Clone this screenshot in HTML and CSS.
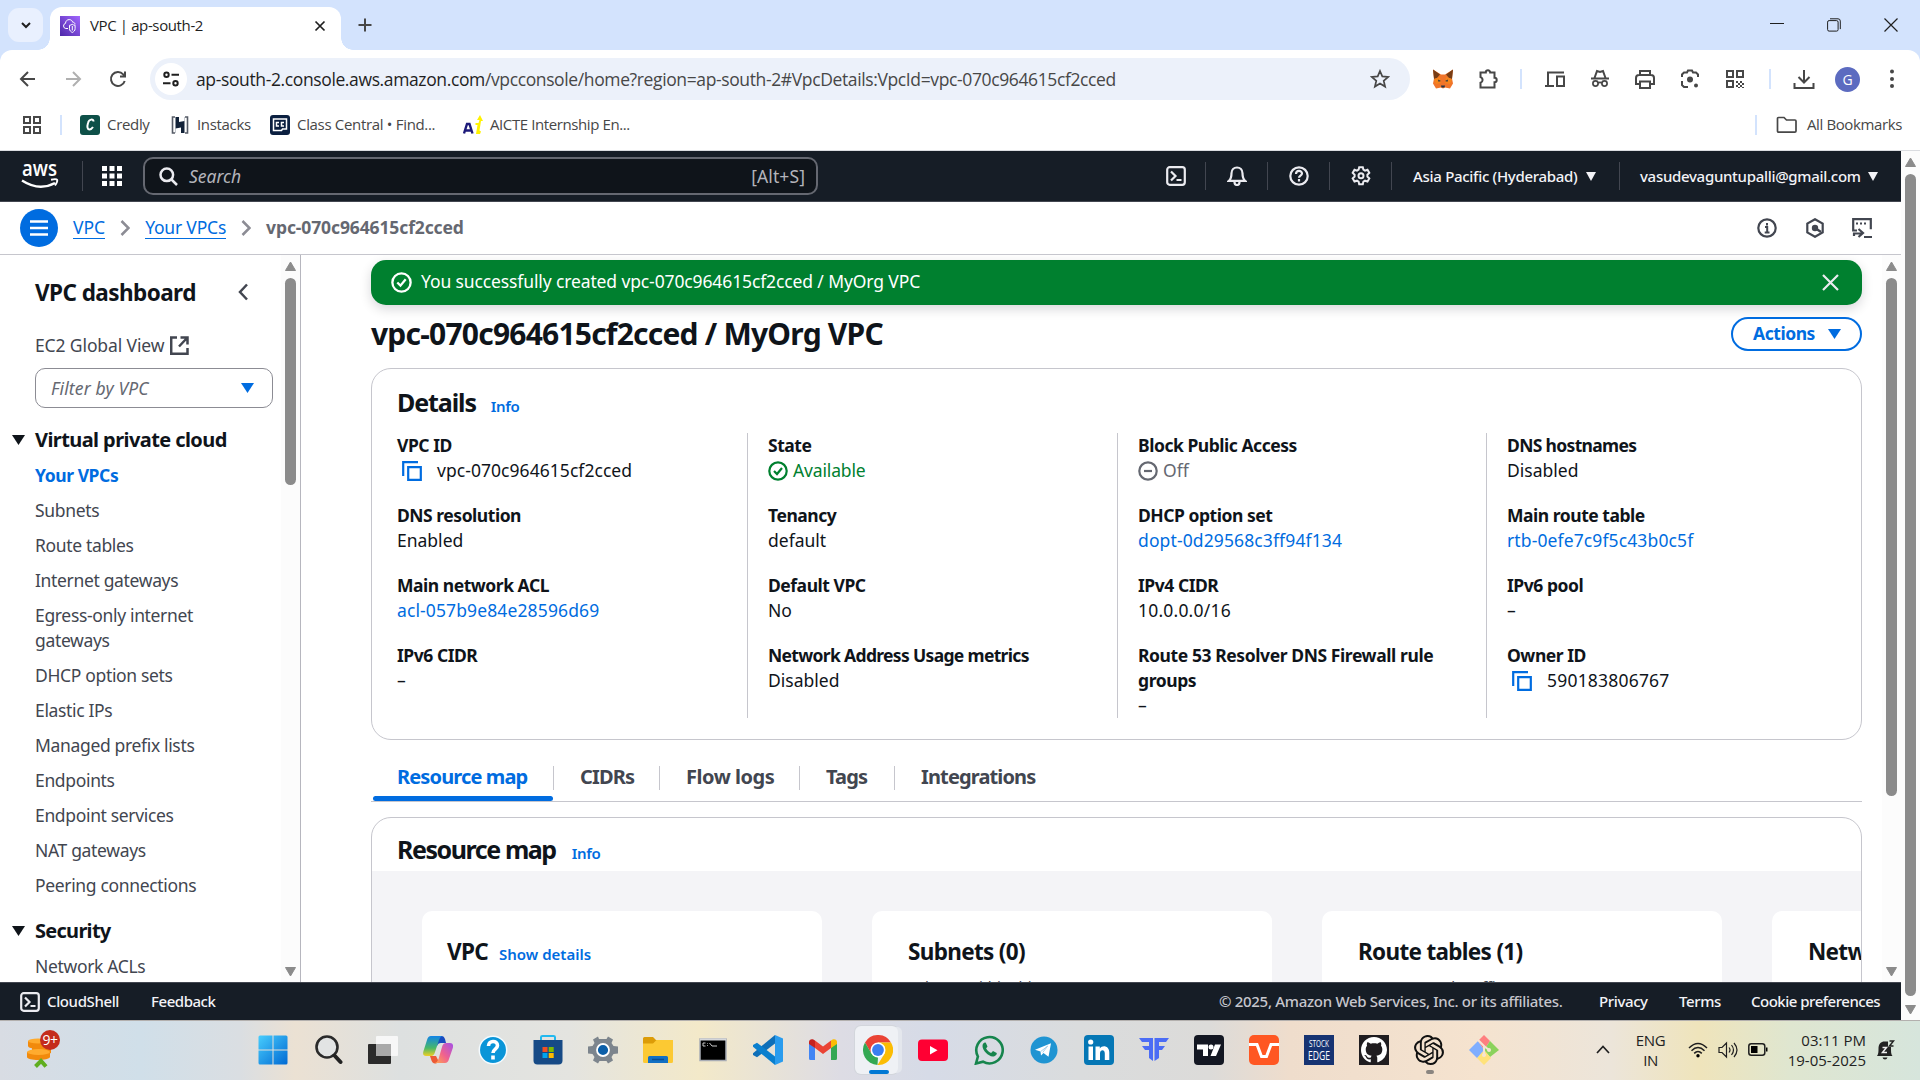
FILE: index.html
```html
<!DOCTYPE html>
<html lang="en">
<head>
<meta charset="utf-8">
<title>VPC | ap-south-2</title>
<link rel="stylesheet" href="styles.css">
</head>
<body>
<div class="tabstrip">
  <button class="tab-search"><svg width="12" height="12" viewBox="0 0 12 12"><path d="M2 4l4 4 4-4" class="s ink w2"/></svg></button>
  <div class="tab">
    <svg class="fav" width="20" height="20" viewBox="0 0 20 20"><defs><linearGradient id="vp" x1="0" y1="1" x2="1" y2="0"><stop offset="0" stop-color="#4d27a8"/><stop offset="1" stop-color="#a166ff"/></linearGradient></defs><path fill="url(#vp)" d="M0 0h20v20H0z"/><path d="M8 12.500H5.800a2.600 2.600 0 0 1-.3-5.100C5.600 5 7.200 3.600 9.200 3.600c1.900 0 3 1 3.500 2.600 1.500 0 2.300.9 2.300 2.200M9.500 9.300c1 0 2-.5 2.800-1 .8.500 1.800 1 2.800 1v3.400c0 2-1.400 3-2.800 3.800-1.400-.8-2.800-1.800-2.800-3.800zM12.300 10v4.500" fill="none" stroke="#fff"/></svg>
    <span class="tab-title">VPC | ap-south-2</span>
    <svg class="tab-x" width="12" height="12" viewBox="0 0 12 12"><path d="M1.500 1.500l9 9M10.500 1.500l-9 9" class="s ink w17"/></svg>
  </div>
  <svg class="plus" width="14" height="14" viewBox="0 0 14 14"><path d="M7 .5v13M.5 7h13" class="s gray w2"/></svg>
  <div class="winbtns">
    <svg width="14" height="14" viewBox="0 0 14 14"><path d="M0 5.500h14" class="s ink"/></svg>
    <svg width="14" height="14" viewBox="0 0 14 14"><rect x=".6" y="2.600" width="10.500" height="10.500" rx="1.500" class="s ink"/><path d="M3 .8h8a2.300 2.300 0 0 1 2.300 2.300v8" class="s ink"/></svg>
    <svg width="14" height="14" viewBox="0 0 14 14"><path d="M.5.5l13 13M13.500.5l-13 13" class="s ink w12"/></svg>
  </div>
</div>

<div class="toolbar">
  <svg class="nav1" width="20" height="20" viewBox="0 0 20 20"><path d="M17 10H3.500M10 3l-7 7 7 7" class="s gray w2"/></svg>
  <svg class="nav2" width="20" height="20" viewBox="0 0 20 20"><path d="M3 10h13.500M10 3l7 7-7 7" class="s dim w2"/></svg>
  <svg class="nav3" width="20" height="20" viewBox="0 0 20 20"><path d="M16.700 12a7 7 0 1 1-1.500-6.700L17 7.300M17 2.500v5h-5" class="s gray w2"/></svg>
  <div class="omnibox">
    <span class="siteinfo"><svg width="18" height="18" viewBox="0 0 18 18"><circle cx="4.500" cy="4.800" r="2.200" class="s ink w2"/><path d="M9.500 4.800H17M1 13.200h7.500" class="s ink w2"/><circle cx="13.500" cy="13.200" r="2.200" class="s ink w2"/></svg></span>
    <span class="url"><b>ap-south-2.console.aws.amazon.com</b>/vpcconsole/home?region=ap-south-2#VpcDetails:VpcId=vpc-070c964615cf2cced</span>
    <svg class="star" width="20" height="20" viewBox="0 0 20 20"><path d="M10 2l2.300 5.400 5.900.5-4.500 3.900 1.400 5.800L10 14.500l-5.100 3.100 1.400-5.800L1.800 7.900l5.900-.5z" class="s gray w17"/></svg>
  </div>
  <div class="exts">
    <svg viewBox="0 0 22 22"><path fill="#f0742a" d="M1 1.500l8 5h4l8-5-1 9 1 5-3 5-5-1-2 1-2-1-5 1-3-5 1-5z"/><path fill="#763d16" d="M1 1.500l7 5-3 3.500-3 1zM21 1.500l-7 5 3 3.500 3 1z"/><path fill="#f6851b" d="M2 11l6-2 1 6-5 1zM20 11l-6-2-1 6 5 1z"/><path fill="#233447" d="M6 11.500l3 1.500-2.500.8zM16 11.500l-3 1.500 2.500.8zM9 17.500h4l-.5 2h-3z"/></svg>
    <svg viewBox="0 0 22 22"><path d="M2.500 4.500h5.300a2.200 2.200 0 1 1 4.400 0h4.300v5.300a2.200 2.200 0 1 1 0 4.400v5.300h-14v-4.700a3 3 0 0 0 0-5.700z" class="s gray w2"/></svg>
    <i class="vsep"></i>
    <svg viewBox="0 0 22 22"><path d="M1 18h9M4 18V4.500h16M13 8.500h7v9.500h-7z" class="s gray w2"/></svg>
    <svg viewBox="0 0 22 22"><path d="M2 10.500h18M5.500 10L8 3l3 1 3-1 2.500 7" class="s gray w2"/><circle cx="6.500" cy="15.500" r="2.600" class="s gray w17"/><circle cx="15.500" cy="15.500" r="2.600" class="s gray w17"/><path d="M9 15q2-1.200 4 0" class="s gray w17"/></svg>
    <svg viewBox="0 0 22 22"><path d="M6 7V3h10v4M6 16H2V10a3 3 0 0 1 3-3h12a3 3 0 0 1 3 3v6h-4M6 13.500h10V20H6z" class="s gray w2"/></svg>
    <svg viewBox="0 0 22 22"><path d="M3 9V6.500L5 4.500h3l1-2h4l1 2h3l2 2V9M3 13v4l2 2h4" class="s gray w2"/><circle cx="11" cy="11.500" r="3" fill="#474747"/><circle cx="17" cy="17.500" r="2" fill="#474747"/></svg>
    <svg viewBox="0 0 22 22"><path d="M3 3h6v6H3zM13 3h6v6h-6zM3 13h6v6H3z" class="s gray w2"/><path d="M12 13h2v2h-2zM16 13h2v2h-2zM14 15h2v2h-2zM18 15h2v2h-2zM12 17h2v2h-2zM16 17h2v2h-2zM18 19h2v1h-2zM14 19h2v1h-2z" fill="#474747"/></svg>
    <i class="vsep"></i>
    <svg viewBox="0 0 22 22"><path d="M11 2v12M5.500 9l5.500 5.500L16.500 9M1.500 15v5h19v-5" class="s gray w2"/></svg>
    <span class="avatar">G</span>
    <svg viewBox="0 0 22 22"><circle cx="11" cy="3.500" r="2" fill="#474747"/><circle cx="11" cy="11" r="2" fill="#474747"/><circle cx="11" cy="18" r="2" fill="#474747"/></svg>
  </div>
</div>

<div class="bookmarks">
  <svg class="bm-grid" width="18" height="18" viewBox="0 0 18 18"><path d="M1 1h6v6H1zM11 1h6v6h-6zM1 11h6v6H1zM11 11h6v6h-6z" class="s gray w2"/></svg>
  <i class="vsep"></i>
  <span class="bm b1"><svg width="20" height="20" viewBox="0 0 20 20"><rect width="20" height="20" rx="3" fill="#0e5048"/><path d="M13.500 6.500c0-3-4.500-2.500-5.500 1.500-1.200 4-.5 6.500 1.500 6.500 1.500 0 2.500-1 3.500-2.500" fill="none" stroke="#fff" stroke-width="2"/></svg>Credly</span>
  <span class="bm b2"><svg width="20" height="20" viewBox="0 0 20 20"><path d="M5 2H2.500v16H5M15 2h2.500v16H15" fill="none" stroke="#555b66" stroke-width="1.600"/><path fill="#122238" d="M5.500 2h9v16h-9z"/><path fill="#fff" d="M9 2h5.500v4L9 7zM5.500 13.500L11 12.500V18H5.500z"/></svg>Instacks</span>
  <span class="bm b3"><svg width="20" height="20" viewBox="0 0 20 20"><rect width="20" height="20" rx="3" fill="#0b1f40"/><path d="M3.500 4h13v10h-4l-1 1.500H3.500z" fill="none" stroke="#fff" stroke-width="1.500"/><path d="M9 7.500H6.500v3.500H9M14 7.500h-2.500v3.500H14" fill="none" stroke="#fff" stroke-width="1.500"/></svg>Class Central • Find...</span>
  <span class="bm b4"><svg width="20" height="20" viewBox="0 0 20 20"><path d="M1 18.500L4 9h2.500l3 9.500M2.500 15.500h5.500" fill="none" stroke="#1d1a7a" stroke-width="2.400"/><path fill="#fff200" d="M17 0l3 6h-2l-1.500 9.500 1.500 1-1 2.500h-4l1.500-9h-2V8h3l1-3h-2.500z"/></svg>AICTE Internship En...</span>
  <span class="allbm"><i class="vsep"></i><svg width="22" height="18" viewBox="0 0 22 18"><path d="M1.500 2.500q0-1 1-1h5.500l2.500 2.500h8.500q1 0 1 1V15q0 1.200-1.200 1.200H2.700q-1.200 0-1.200-1.200z" class="s gray w17"/></svg>All Bookmarks</span>
</div>

<div class="page">
<div class="console">
  <header class="awsbar">
    <svg class="awslogo" width="38" height="27" viewBox="0 0 38 27"><text x="1" y="14" textLength="35" lengthAdjust="spacingAndGlyphs" class="awstext">aws</text><path d="M1 18.500q17 11 33 2.500" fill="none" stroke="#fff" stroke-width="2.400"/><path d="M30 17.800q5.500-1.200 6.200.2.500 1.600-2.200 5.500" fill="none" stroke="#fff" stroke-width="1.900"/></svg>
    <i class="hsep"></i>
    <svg class="apps" width="20" height="20" viewBox="0 0 20 20"><path fill="#fff" d="M0 0h5v5H0zM7.500 0h5v5h-5zM15 0h5v5h-5zM0 7.500h5v5H0zM7.500 7.500h5v5h-5zM15 7.500h5v5h-5zM0 15h5v5H0zM7.500 15h5v5h-5zM15 15h5v5h-5z"/></svg>
    <div class="search"><svg width="19" height="19" viewBox="0 0 19 19"><circle cx="7.800" cy="7.800" r="6.300" class="s lite w25"/><path d="M12.500 12.500l5.500 5.500" class="s lite w25"/></svg><em>Search</em><span>[Alt+S]</span></div>
    <div class="hcells">
      <a><svg width="20" height="20" viewBox="0 0 20 20"><rect x="1.200" y="1.200" width="17.600" height="17.600" rx="2.500" class="s lite w22"/><path d="M5 5.500L9.500 10 5 14.500M10.500 14H15.500" class="s lite w22"/></svg></a>
      <a><svg width="20" height="20" viewBox="0 0 20 20"><path d="M2 14.800h16c-2-1.800-2.500-4-2.500-7.500C15.500 3.500 13 1.500 10 1.500S4.500 3.500 4.500 7.300C4.500 10.800 4 13 2 14.800zM7.500 16c0 4 5 4 5 0" class="s lite w22"/></svg></a>
      <a><svg width="20" height="20" viewBox="0 0 20 20"><circle cx="10" cy="10" r="8.700" class="s lite w22"/><path d="M7 8c0-4 6-4 6-.5 0 2.200-3 2-3 4.300M10 13v2.500" class="s lite w22"/></svg></a>
      <a><svg width="20" height="20" viewBox="0 0 20 20"><path d="M8.200 1.200h3.600l.6 2.500 1.600.9 2.500-.8 1.800 3.100-1.900 1.800v1.900l1.900 1.800-1.800 3.100-2.500-.8-1.600.9-.6 2.700H8.200l-.6-2.700-1.600-.9-2.500.8-1.800-3.100 1.900-1.800V8.700L1.700 6.900l1.800-3.100 2.500.8 1.600-.9z" class="s lite w2"/><circle cx="10" cy="9.800" r="2.500" class="s lite w2"/></svg></a>
      <a class="region"><span>Asia Pacific (Hyderabad)</span><svg class="car" width="10" height="9" viewBox="0 0 10 9"><path d="M0 0h10L5 9z" fill="#f3f3f7"/></svg></a>
      <a class="acct"><span>vasudevaguntupalli@gmail.com</span><svg class="car" width="10" height="9" viewBox="0 0 10 9"><path d="M0 0h10L5 9z" fill="#f3f3f7"/></svg></a>
    </div>
  </header>
  <nav class="crumbs">
    <span class="burger"><svg width="18" height="16" viewBox="0 0 18 16"><path d="M0 1.500h18M0 8h18M0 14.500h18" stroke="#fff" stroke-width="2.500"/></svg></span>
    <a class="c1">VPC</a><svg class="chev" width="10" height="16" viewBox="0 0 10 16"><path d="M1.500 1l7 7-7 7" class="s w25 chv"/></svg>
    <a class="c2">Your VPCs</a><svg class="chev" width="10" height="16" viewBox="0 0 10 16"><path d="M1.500 1l7 7-7 7" class="s w25 chv"/></svg>
    <b class="c3">vpc-070c964615cf2cced</b>
    <div class="cicons">
      <svg width="20" height="20" viewBox="0 0 20 20"><circle cx="10" cy="10" r="8.700" class="s slate w22"/><path d="M10 5v2.500M8 9h2.200v5M7.700 14.500h4.800" class="s slate w2"/></svg>
      <svg width="20" height="20" viewBox="0 0 20 20"><path d="M10 1.200l7.700 4.400v8.800L10 18.800l-7.700-4.400V5.600z" class="s slate w22"/><circle cx="10" cy="10" r="3.200" fill="#424650"/><path d="M10 10l6 4" class="s slate w25"/></svg>
      <svg width="20" height="20" viewBox="0 0 20 20"><path d="M5 12.500H1.200V1.200h17.600v10M12 19h8" class="s slate w22"/><path d="M4 5.500h2M8 5.500h2M12 5.500h2" class="s slate w22"/><path d="M2 18v-2.500h8M6.500 11l4.500 4-4.500 4" class="s slate w22"/></svg>
    </div>
  </nav>
  <div class="body">
    <aside class="side">
      <div class="sidein">
        <div class="shead"><b>VPC dashboard</b><svg width="10" height="18" viewBox="0 0 10 18"><path d="M9 1.500L2 9l7 7.500" class="s slate w25"/></svg></div>
        <div class="ec2">EC2 Global View<svg width="19" height="19" viewBox="0 0 19 19"><path d="M7 1.500H1.200v16.300h16.300V12M10.500 1.500h7v7M17.500 1.500l-8.500 9" class="s slate w25"/></svg></div>
        <div class="filter"><em>Filter by VPC</em><svg width="13" height="10" viewBox="0 0 13 10"><path d="M0 0h13L6.500 10z" fill="#006ce0"/></svg></div>
        <div class="grp"><svg width="13" height="10" viewBox="0 0 13 10"><path d="M0 0h13L6.500 10z" fill="#0f141a"/></svg><b>Virtual private cloud</b></div>
        <ul><li class="on">Your VPCs</li><li>Subnets</li><li>Route tables</li><li>Internet gateways</li><li>Egress-only internet<br>gateways</li><li>DHCP option sets</li><li>Elastic IPs</li><li>Managed prefix lists</li><li>Endpoints</li><li>Endpoint services</li><li>NAT gateways</li><li>Peering connections</li></ul>
        <div class="grp g2"><svg width="13" height="10" viewBox="0 0 13 10"><path d="M0 0h13L6.500 10z" fill="#0f141a"/></svg><b>Security</b></div>
        <ul><li>Network ACLs</li></ul>
      </div>
      <div class="sb"><svg width="13" height="10" viewBox="0 0 13 10"><path d="M1.500 9.500L6.500 1l5 8.500z" class="arr"/></svg><i class="th1"></i><svg class="dn" width="13" height="10" viewBox="0 0 13 10"><path d="M1.500.5L6.500 9l5-8.500z" class="arr"/></svg></div>
    </aside>
    <main>
      <div class="flash"><svg width="21" height="21" viewBox="0 0 20 20"><circle cx="10" cy="10" r="8.700" class="s wht w22"/><path d="M6 10l3 3 5-6" class="s wht w22"/></svg><span>You successfully created vpc-070c964615cf2cced / MyOrg VPC</span><svg class="fx" width="17" height="17" viewBox="0 0 17 17"><path d="M1 1l15 15M16 1L1 16" stroke="#ebebf0" stroke-width="2.200"/></svg></div>
      <div class="title"><h1>vpc-070c964615cf2cced / MyOrg VPC</h1><button class="actions"><span>Actions</span><svg width="13" height="10" viewBox="0 0 13 10"><path d="M0 0h13L6.500 10z" fill="#006ce0"/></svg></button></div>
      <section class="details">
        <h2>Details<a>Info</a></h2>
        <div class="cols">
          <dl><dt>VPC ID</dt><dd class="cp"><svg width="20" height="20" viewBox="0 0 20 20"><path d="M6.200 6.200h12.600v12.600H6.200zM1.200 15V1.200H16" class="s blue w22"/></svg>vpc-070c964615cf2cced</dd><dt>DNS resolution</dt><dd>Enabled</dd><dt>Main network ACL</dt><dd class="lk">acl-057b9e84e28596d69</dd><dt>IPv6 CIDR</dt><dd>–</dd></dl>
          <dl><dt>State</dt><dd class="ok"><svg width="20" height="20" viewBox="0 0 20 20"><circle cx="10" cy="10" r="8.700" class="s grn w22"/><path d="M6 10l3 3 5-6" class="s grn w22"/></svg>Available</dd><dt>Tenancy</dt><dd>default</dd><dt>Default VPC</dt><dd>No</dd><dt class="nau">Network Address Usage metrics</dt><dd>Disabled</dd></dl>
          <dl><dt>Block Public Access</dt><dd class="off"><svg width="20" height="20" viewBox="0 0 20 20"><circle cx="10" cy="10" r="8.700" class="s w22"/><path d="M6 10h8" class="s w22"/></svg>Off</dd><dt>DHCP option set</dt><dd class="lk">dopt-0d29568c3ff94f134</dd><dt>IPv4 CIDR</dt><dd class="wide">10.0.0.0/16</dd><dt class="r53">Route 53 Resolver DNS Firewall rule<br>groups</dt><dd>–</dd></dl>
          <dl><dt class="nau">DNS hostnames</dt><dd>Disabled</dd><dt>Main route table</dt><dd class="lk">rtb-0efe7c9f5c43b0c5f</dd><dt>IPv6 pool</dt><dd>–</dd><dt>Owner ID</dt><dd class="cp wide"><svg width="20" height="20" viewBox="0 0 20 20"><path d="M6.200 6.200h12.600v12.600H6.200zM1.200 15V1.200H16" class="s blue w22"/></svg>590183806767</dd></dl>
        </div>
      </section>
      <div class="tabs"><a class="t1">Resource map</a><a class="t2">CIDRs</a><a class="t3">Flow logs</a><a class="t4">Tags</a><a class="t5">Integrations</a></div>
      <section class="rmap">
        <h2>Resource map<a>Info</a></h2>
        <div class="cards">
          <div class="card first"><h3>VPC<a>Show details</a></h3><p>Your AWS virtual network</p></div>
          <div class="card"><h3>Subnets (0)</h3><p>Subnets within this VPC</p></div>
          <div class="card"><h3>Route tables (1)</h3><p>Route network traffic to resources</p></div>
          <div class="card"><h3>Network connections (0)</h3><p>Connections to other networks</p></div>
        </div>
      </section>
    </main>
    <div class="sb main-sb"><svg width="13" height="10" viewBox="0 0 13 10"><path d="M1.500 9.500L6.500 1l5 8.500z" class="arr"/></svg><i class="th2"></i><svg class="dn" width="13" height="10" viewBox="0 0 13 10"><path d="M1.500.5L6.500 9l5-8.500z" class="arr"/></svg></div>
  </div>
  <footer>
    <svg width="20" height="20" viewBox="0 0 20 20"><rect x="1.200" y="1.200" width="17.600" height="17.600" rx="2.500" class="s lite w22"/><path d="M5 5.500L9.500 10 5 14.500M10.500 14H15.500" class="s lite w22"/></svg>
    <span class="f1">CloudShell</span><span class="f2">Feedback</span><span class="f3">© 2025, Amazon Web Services, Inc. or its affiliates.</span><span class="f4">Privacy</span><span class="f5">Terms</span><span class="f6">Cookie preferences</span>
  </footer>
</div>
<div class="sb page-sb"><svg width="13" height="10" viewBox="0 0 13 10"><path d="M1.500 9.500L6.500 1l5 8.500z" class="arr"/></svg><i class="th3"></i><svg class="dn" width="13" height="10" viewBox="0 0 13 10"><path d="M1.500.5L6.500 9l5-8.500z" class="arr"/></svg></div>
</div>

<div class="taskbar">
  <div class="widget"><svg width="36" height="40" viewBox="0 0 36 40"><g fill="#f28a0c"><path d="M2 10v5c0 3 14 4 20 1v-6z"/><path d="M6 16v5c0 3 14 4 19 1v-6z"/><path d="M1 21v5c0 4 22 4 23 0v-5z"/></g><g fill="#ffab2e"><ellipse cx="12" cy="10" rx="10" ry="2.500"/><ellipse cx="12.500" cy="21" rx="11.500" ry="3"/></g><path d="M9.500 35.500l5.500-5.500 5 5.500" fill="none" stroke="#5fae1f" stroke-width="4"/></svg><span class="badge">9+</span></div>
  <div class="apps-row">
    <i><svg viewBox="0 0 30 30"><defs><linearGradient id="wn" x1="0" y1="0" x2="1" y2="1"><stop offset="0" stop-color="#48cdfd"/><stop offset="1" stop-color="#0069d3"/></linearGradient></defs><path fill="url(#wn)" d="M.5 2a1.500 1.500 0 0 1 1.500-1.500h12.500v14H.5zM15.500.5H28A1.500 1.500 0 0 1 29.500 2v12.500h-14zM.5 15.500h14v14H2A1.500 1.500 0 0 1 .5 28zM15.500 15.500h14V28a1.500 1.500 0 0 1-1.500 1.500H15.500z"/></svg></i>
    <i><svg viewBox="0 0 30 30"><circle cx="14" cy="12" r="10.500" fill="#e2e4e4" stroke="#2a2a2a" stroke-width="2.600"/><path d="M21.500 20.500l6 6.500" stroke="#222" stroke-width="4" stroke-linecap="round"/></svg></i>
    <i><svg viewBox="0 0 30 30"><rect x="0" y="9" width="23" height="20" rx="1" fill="#2b2b2b"/><rect x="8" y="1" width="22" height="20" rx="1" fill="#f7f7f7"/><path d="M8 9h15v12H8z" fill="#a9a9a9"/></svg></i>
    <i><svg viewBox="0 0 30 30"><defs><linearGradient id="cpa" x1="0" y1="0" x2="0" y2="1"><stop offset="0" stop-color="#1184e8"/><stop offset=".6" stop-color="#48b868"/><stop offset="1" stop-color="#f0cf24"/></linearGradient><linearGradient id="cpb" x1="1" y1="0" x2="0" y2="1"><stop offset="0" stop-color="#a450e8"/><stop offset=".55" stop-color="#f0628e"/><stop offset="1" stop-color="#ffa74e"/></linearGradient></defs><path fill="#174bc0" d="M14 1h5q2 0 3 3l1 4h-5q-3 0-4 3z"/><path fill="url(#cpa)" d="M8 1h11q-2 1-3 4l-4 12q-1 4-4 4H3q-4 0-2.500-5L4 5q1-4 4-4z"/><path fill="#ec5a35" d="M7 21h6l3 6-3 1.500h-1q-2.500 0-3.500-3z"/><path fill="url(#cpb)" d="M22 28H12q2.500-1 3.500-4L19 12q1-4 4-4h4q4 0 2.800 5L26 24q-1 4-4 4z"/></svg></i>
    <i><svg viewBox="0 0 30 30"><circle cx="15" cy="15" r="13.700" fill="#0a95d8" stroke="#f4fbff" stroke-width="1.500"/><path d="M10.500 11c0-6 9-6 9-.5 0 3.800-4.500 3.500-4.500 7.500M15 20.500v4" fill="none" stroke="#fff" stroke-width="3.600"/></svg></i>
    <i><svg viewBox="0 0 30 30"><path d="M8 6V2.200Q8 1 9.500 1h11Q22 1 22 2.200V6" fill="none" stroke="#22b9ef" stroke-width="2"/><path fill="#164a86" d="M.5 5h29v20.500a4 4 0 0 1-4 4h-21a4 4 0 0 1-4-4z"/><path fill="#f25022" d="M9.500 12h5v5h-5z"/><path fill="#7fba00" d="M15.700 12h5v5h-5z"/><path fill="#00a4ef" d="M9.500 18h5v5h-5z"/><path fill="#ffb900" d="M15.700 18h5v5h-5z"/></svg></i>
    <i><svg viewBox="0 0 30 30"><path fill="#7d858d" d="M11 4L10 1.500 5 4.500 6.500 8 4.500 11 0 11.500v7l4.500.5 2 3-1.500 3.500 5 3 1.500-2.500h7l1.500 2.500 5-3-1.500-3.500 2-3 4.500-.5v-7l-4.500-.5-2-3L25 4.500l-5-3L18.500 4z"/><circle cx="15" cy="15" r="6" fill="#0b5ea8" stroke="#fff" stroke-width="1.800"/></svg></i>
    <i><svg viewBox="0 0 30 30"><path fill="#dc9c08" d="M0 3.500Q0 2 1.500 2H10l3 3h17v8H0z"/><path fill="#fcc933" d="M0 8.500h10L13.500 5H30v21.500a1.500 1.500 0 0 1-1.500 1.500h-27A1.500 1.500 0 0 1 0 26.500z"/><path fill="#1270c4" d="M5 28v-5.500A1.500 1.500 0 0 1 6.500 21h17a1.500 1.500 0 0 1 1.500 1.500V28z"/><path d="M9 24.500h12" stroke="#0a4c92" stroke-width="1.500"/></svg></i>
    <i><svg viewBox="0 0 30 30"><rect x="2" y="4" width="26" height="21.500" fill="#000" stroke="#a9adb5" stroke-width="1.500"/><path d="M2 4.500h26" stroke="#d4d6da" stroke-width="2"/><path d="M7.500 8H5v3h2.500M9.500 8v.6M9.500 10v.8M11.500 8l2.500 3M14 11h5" stroke="#c8c8c8" fill="none"/></svg></i>
    <i><svg viewBox="0 0 30 30"><path fill="#0f6fb8" d="M22 0v8.500L4 22.300 0 20v-1.800z"/><path fill="#0a7fce" d="M22 30v-8.500L4 7.700 0 10v1.800z"/><path fill="#2a9cee" d="M22 0l8 3.500v23L22 30z"/></svg></i>
    <i><svg viewBox="0 0 30 30"><path fill="#4285f4" d="M1 8l6 4.500V25H2.500A1.500 1.500 0 0 1 1 23.500z"/><path fill="#34a853" d="M29 8l-6 4.500V25h4.500a1.500 1.500 0 0 0 1.500-1.500z"/><path fill="#ea4335" d="M7 5.500l8 6 8-6V13l-8 6-8-6z"/><path fill="#c5221f" d="M1 7c0-2.500 3-4 6-1.500V13L1 9z"/><path fill="#fbbc04" d="M29 7c0-2.500-3-4-6-1.500V13l6-4z"/></svg></i>
    <i class="act"><svg viewBox="0 0 30 30"><path fill="#ea4335" d="M2 7.500A15 15 0 0 1 28 7.500H15L8.500 19z"/><path fill="#34a853" d="M2 7.500l6.500 11.300L15 22.500 14.500 30A15 15 0 0 1 2 7.500z"/><path fill="#fbbc04" d="M28 7.500A15 15 0 0 1 14.500 30l7-11.200V11L15 7.500z"/><circle cx="15" cy="15" r="7.500" fill="#fff"/><circle cx="15" cy="15" r="5.900" fill="#3b7ef0"/></svg></i>
    <i><svg viewBox="0 0 30 30"><rect y="4.500" width="30" height="21.500" rx="4" fill="#f03"/><path fill="#fff" d="M12 11l7.500 4.300L12 19.500z"/></svg></i>
    <i><svg viewBox="0 0 30 30"><path d="M2 28.500l1.900-7A13.200 13.200 0 1 1 9 26.700z" fill="none" stroke="#16854d" stroke-width="2.600"/><path fill="#16854d" d="M8.500 11c0-2.500 2-4 3.300-3.200l1.700 3.700-1.400 2c1.300 2.300 3 3.700 5 4.500l1.900-2 3.700 1.900c.5 1.500-1.500 3.600-4 3.600-4.500-.3-10.200-6-10.200-10.500z"/></svg></i>
    <i><svg viewBox="0 0 30 30"><circle cx="15" cy="15" r="13.500" fill="#1f94d2"/><path fill="#fff" d="M6 14.700l16-6.500-2.500 13.500-5-3.600-2.500 2.400-.5-4z"/><path d="M11.700 16.500l7-5.500-5 6.500" stroke="#a9d2ea" fill="none"/></svg></i>
    <i><svg viewBox="0 0 30 30"><rect width="30" height="30" rx="4" fill="#0577b5"/><path fill="#fff" d="M4.500 11.500H9V25H4.500zM11.500 11.500h4.300v2c2.500-4 9.500-3 9.500 4V25h-4.500v-6.500c0-4.500-4.800-4-4.800 0V25h-4.500z"/><circle cx="6.700" cy="7" r="2.600" fill="#fff"/></svg></i>
    <i><svg viewBox="0 0 30 30"><path fill="#4b6cf5" d="M0 3h14v23l-4-3v-8H6l-3-4h7V7H3zM15.500 3H30l-3 4h-7v4h6l-3 4h-3v8l-4.500 3z"/></svg></i>
    <i><svg viewBox="0 0 30 30"><rect width="30" height="30" rx="4" fill="#131722"/><path fill="#fff" d="M3 9.500h11V21H9v-6.500H3zM21 9.500h6L22 21h-5.500z"/><circle cx="17" cy="12" r="2.500" fill="#fff"/></svg></i>
    <i><svg viewBox="0 0 30 30"><rect width="30" height="30" rx="5" fill="#ff5722"/><path d="M0 9.500h8l4.500 12h5l4.500-12h8" fill="none" stroke="#fff" stroke-width="3"/></svg></i>
    <i><svg viewBox="0 0 30 30"><path fill="#163372" d="M0 0h30v30H0z"/><text x="5" y="11.500" textLength="20" lengthAdjust="spacingAndGlyphs" class="stk">STOCK</text><text x="4" y="25" textLength="22" lengthAdjust="spacingAndGlyphs" class="edg">EDGE</text></svg></i>
    <i><svg viewBox="0 0 30 30"><path fill="#201d20" d="M0 0h30v30H0z"/><path transform="translate(2 2) scale(1.625)" fill="#fff" d="M8 0C3.580 0 0 3.580 0 8c0 3.540 2.290 6.530 5.470 7.590.4.070.55-.170.550-.380 0-.190-.010-.820-.010-1.490-2.010.370-2.530-.490-2.690-.940-.090-.230-.480-.940-.820-1.130-.280-.150-.680-.520-.010-.530.630-.010 1.080.580 1.230.820.720 1.210 1.870.870 2.330.660.070-.520.280-.870.510-1.070-1.780-.200-3.640-.890-3.640-3.950 0-.870.310-1.590.820-2.150-.080-.200-.360-1.020.080-2.120 0 0 .670-.210 2.200.820.640-.180 1.320-.270 2-.270s1.360.090 2 .270c1.530-1.040 2.200-.820 2.200-.820.440 1.100.160 1.920.080 2.120.510.560.820 1.270.820 2.150 0 3.070-1.870 3.750-3.650 3.950.290.250.540.730.540 1.480 0 1.070-.010 1.930-.010 2.200 0 .210.150.460.550.380A8.010 8.010 0 0 0 16 8c0-4.420-3.580-8-8-8z"/></svg></i>
    <i class="run"><svg viewBox="0 0 24 24"><path fill="#111" d="M22.2819 9.8211a5.9847 5.9847 0 0 0-.5157-4.9108 6.0462 6.0462 0 0 0-6.5098-2.9A6.0651 6.0651 0 0 0 4.9807 4.1818a5.9847 5.9847 0 0 0-3.9977 2.9 6.0462 6.0462 0 0 0 .7427 7.0966 5.98 5.98 0 0 0 .511 4.9107 6.051 6.051 0 0 0 6.5146 2.9001A5.9847 5.9847 0 0 0 13.2599 24a6.0557 6.0557 0 0 0 5.7718-4.2058 5.9894 5.9894 0 0 0 3.9977-2.9001 6.0557 6.0557 0 0 0-.7475-7.0729zm-9.022 12.6081a4.4755 4.4755 0 0 1-2.8764-1.0408l.1419-.0804 4.7783-2.7582a.7948.7948 0 0 0 .3927-.6813v-6.7369l2.02 1.1686a.071.071 0 0 1 .038.052v5.5826a4.504 4.504 0 0 1-4.4945 4.4944zm-9.6607-4.1254a4.4708 4.4708 0 0 1-.5346-3.0137l.142.0852 4.783 2.7582a.7712.7712 0 0 0 .7806 0l5.8428-3.3685v2.3324a.0804.0804 0 0 1-.0332.0615L9.74 19.9502a4.4992 4.4992 0 0 1-6.1408-1.6464zM2.3408 7.8956a4.485 4.485 0 0 1 2.3655-1.9728V11.6a.7664.7664 0 0 0 .3879.6765l5.8144 3.3543-2.0201 1.1685a.0757.0757 0 0 1-.071 0l-4.8303-2.7865A4.504 4.504 0 0 1 2.3408 7.872zm16.5963 3.8558L13.1038 8.364 15.1192 7.2a.0757.0757 0 0 1 .071 0l4.8303 2.7913a4.4944 4.4944 0 0 1-.6765 8.1042v-5.6772a.79.79 0 0 0-.407-.667zm2.0107-3.0231l-.142-.0852-4.7735-2.7818a.7759.7759 0 0 0-.7854 0L9.409 9.2297V6.8974a.0662.0662 0 0 1 .0284-.0615l4.8303-2.7866a4.4992 4.4992 0 0 1 6.6802 4.66zM8.3065 12.863l-2.02-1.1638a.0804.0804 0 0 1-.038-.0567V6.0742a4.4992 4.4992 0 0 1 7.3757-3.4537l-.142.0805L8.704 5.459a.7948.7948 0 0 0-.3927.6813zm1.0976-2.3654l2.602-1.4998 2.6069 1.4998v2.9994l-2.5974 1.4997-2.6067-1.4997Z"/></svg></i>
    <i><svg viewBox="0 0 30 30"><path fill="#ff7f7f" d="M15 0l6 6-6 9-6-9z"/><path fill="#8bd25c" d="M30 15l-9-9-6 9 6 7z"/><path fill="#ffe27a" d="M15 30l7-7-7-8-7 8z"/><path fill="#7faeff" d="M0 15l9-9 6 9-7 8z"/><path d="M9 5l6 6v9M15 11l5 4" stroke="#f6e4d2" stroke-width="2" fill="none"/><circle cx="15" cy="20" r="2" fill="#f6e4d2"/><circle cx="20" cy="15" r="2" fill="#f6e4d2"/></svg></i>
  </div>
  <div class="tray">
    <svg class="up" width="14" height="9" viewBox="0 0 14 9"><path d="M1 8l6-6.500L13 8" class="s ink w17"/></svg>
    <div class="lang">ENG<br>IN</div>
    <svg class="wifi" width="20" height="16" viewBox="0 0 20 16"><path d="M1 6q9-9 18 0M3.500 8.700q6.500-6.500 13 0M6.200 11.400q3.800-3.800 7.600 0" class="s ink w15"/><circle cx="10" cy="13.800" r="1.700"/></svg>
    <svg class="vol" width="20" height="18" viewBox="0 0 20 18"><path d="M1 6.500h3L8.500 2v14L4 11.500H1zM11 6.500q2 2.500 0 5M13.500 4q4 5 0 10M16 2q6 7 0 14" class="s ink w12"/></svg>
    <svg class="bat" width="20" height="13" viewBox="0 0 20 13"><rect x=".8" y=".8" width="16" height="11.400" rx="2.500" class="s ink w15"/><path d="M3 3h6.500v7H3zM18 4.500h1.500v4H18z"/></svg>
    <div class="clock">03:11 PM<br>19-05-2025</div>
    <svg class="bell" width="18" height="20" viewBox="0 0 18 20"><path fill="#222" d="M0 16c1.500-2 1.500-4 1.500-7.500C1.500 4 4 1.500 7.500 1.500h3.500v5.500h3c0 5 0 7 1.500 9zM5.500 17.500h5q-.5 2-2.500 2t-2.500-2z"/><path d="M5.500 7.500h4l-4 5H10" stroke="#eee" stroke-width="1.500" fill="none"/><path d="M12.500 1h4l-4 5h4" stroke="#222" stroke-width="1.500" fill="none"/></svg>
  </div>
</div>
</body>
</html>
```
FILE: styles.css
```css
*{box-sizing:border-box}
html,body{margin:0;width:1920px;height:1080px;overflow:hidden}
body{font-family:"Open Sans","Noto Sans",sans-serif;background:#fff;color:#0f141a;display:flex;flex-direction:column}
svg{display:block;flex:none}
i,em,b{flex:none}
button{padding:0;border:0;font:inherit}
ul,dl,dd,h1,h2,h3,p{margin:0;padding:0;list-style:none}
.s{fill:none;stroke-width:1}
.ink{stroke:#1f1f1f}.gray{stroke:#474747}.dim{stroke:#b0b0b0}.lite{stroke:#ebebf0}.slate{stroke:#424650}.wht{stroke:#fff}.blue{stroke:#006ce0}.grn{stroke:#00802f}.chv{stroke:#8c8c94}.off .s{stroke:#656871}
.w12{stroke-width:1.2}.w15{stroke-width:1.5}.w17{stroke-width:1.7}.w2{stroke-width:2}.w22{stroke-width:2.2}.w25{stroke-width:2.5}
.arr{fill:#8b8b8b;stroke:#8b8b8b;stroke-linejoin:round}

.tabstrip{height:50px;background:#d3e3fd;display:flex;align-items:flex-start;position:relative}
.tab-search{margin:8px 0 0 8px;width:35px;height:34px;border-radius:11px;background:#e9f0fe;display:flex;align-items:center;justify-content:center}
.tab{margin:7px 0 0 7px;width:291px;height:43px;background:#fff;border-radius:12px 12px 0 0;display:flex;align-items:center;padding:0 15px 6px 10px;position:relative}
.tab::before,.tab::after{content:"";position:absolute;bottom:0;width:12px;height:12px}
.tab::before{left:-12px;background:radial-gradient(circle at 0 0,transparent 11.500px,#fff 12px)}
.tab::after{right:-12px;background:radial-gradient(circle at 12px 0,transparent 11.500px,#fff 12px)}
.tab-title{margin-left:10px;font-size:15px;letter-spacing:-.38px;flex:1;color:#1f1f1f;white-space:nowrap;padding-bottom:2px}
.plus{margin:18px 0 0 17px}
.winbtns{margin:18px 22px 0 auto;display:flex;gap:43px}

.toolbar{height:58px;background:#fff;display:flex;align-items:center;padding-left:18px;border-radius:12px 12px 0 0;box-shadow:0 -12px 0 #d3e3fd;clip-path:inset(0)}
.nav1{margin-right:25px}.nav2{margin-right:25px}.nav3{margin-right:22px}
.omnibox{width:1260px;height:42px;border-radius:21px;background:#ecf1fa;display:flex;align-items:center;padding:0 20px 0 5px}
.siteinfo{width:32px;height:32px;border-radius:50%;background:#fff;display:flex;align-items:center;justify-content:center}
.url{margin-left:9px;font-size:17.500px;letter-spacing:-.375px;color:#474747;white-space:nowrap;flex:1}
.url b{font-weight:400;color:#1f1f1f}
.exts{flex:1;display:flex;align-items:center;height:42px;padding-left:22px}
.exts svg{width:22px;height:22px;margin-right:23px}
.exts svg:nth-child(1){margin-right:24px}
.exts svg:nth-child(2){margin-right:20px}
.vsep{width:2px;height:20px;background:#d3e3fd;flex:none}
.exts .vsep{margin-right:22px}
.exts svg:nth-child(8){margin-right:23px}
.exts .avatar{width:25px;height:25px;border-radius:50%;background:#5c6bc0;color:#fff;font-size:14px;display:flex;align-items:center;justify-content:center;margin:0 21px 0 -3px}
.exts svg:last-child{margin-right:0}

.bookmarks{height:43px;border-bottom:1px solid #dadce0;display:flex;align-items:flex-start;padding:7px 18px 0 23px;font-size:15px;letter-spacing:-.32px;color:#474747;white-space:nowrap}
.bm-grid{margin:1px 19px 0 0}
.bm,.allbm{display:flex;align-items:center;height:18px;line-height:18px}
.bm svg{margin:2px 7px 0 0}
.b1{margin-left:18px;width:90px}.b2{width:100px}.b3{width:193px}.b4{letter-spacing:-.4px}
.allbm{margin-left:auto;letter-spacing:-.38px}.allbm i{margin-top:2px}.allbm svg{margin:2px 9px 0 19px}

.page{display:flex;height:869px}
.console{width:1901px;display:flex;flex-direction:column;font-family:"Noto Sans","Open Sans",sans-serif;font-size:17.500px;line-height:25px}
.awsbar{height:51px;background:#161d26;border-bottom:1px solid #424650;display:flex;align-items:center;white-space:nowrap}
.awslogo{margin:-2px 0 0 21px;overflow:visible}
.awstext{font:600 22px "Open Sans",sans-serif;fill:#fff}
.hsep{width:1px;height:30px;background:#424650;margin-left:23px}
.apps{margin:0 21px 0 19px}
.search{width:675px;height:38px;border:2px solid #656871;border-radius:10px;background:#0f141a;display:flex;align-items:center;padding:0 11px 0 14px;color:#b4b4bb;font-size:17.500px}
.search em{margin-left:11px;flex:1;letter-spacing:0}
.search span{font-size:17.500px;letter-spacing:.1px}
.hcells{margin-left:auto;display:flex;align-items:center;height:30px;color:#f3f3f7;font-size:15px;font-weight:500;letter-spacing:-.3px}
.hcells a{width:62px;height:28px;display:flex;align-items:center;justify-content:center;border-left:1px solid #424650}
.hcells a:first-child{border:0;width:60px;padding-left:2px}
.hcells .region{width:228px;justify-content:flex-start;padding-left:21px}
.hcells .acct{width:282px;justify-content:flex-start;padding-left:20px}
.region span{width:173px}.acct span{width:228px}

.crumbs{height:53px;border-bottom:1px solid #c6c6cd;display:flex;align-items:center;padding-left:20px;white-space:nowrap}
.burger{width:38px;height:38px;border-radius:50%;background:#006ce0;display:flex;align-items:center;justify-content:center;margin-right:15px}
.crumbs a{color:#006ce0;border-bottom:1px solid #006ce0;line-height:22px;margin-top:-1px}
.c1{margin-right:15px}.chev{margin-right:15px}.c2{margin-right:15px;letter-spacing:-.2px}
.c3{color:#656871;letter-spacing:-.12px;margin-top:-1px}
.cicons{margin:0 29px 0 auto;display:flex;gap:27.500px}

.body{flex:1;display:flex;min-height:0;height:727px}
.side{width:301px;border-right:1px solid #b6b6be;display:flex;overflow:hidden}
.sidein{width:281px;padding:0 9px 0 35px;color:#424650;white-space:nowrap;overflow:hidden}
.shead{display:flex;justify-content:space-between;align-items:center;margin-top:22px;height:30px;padding-right:24px;font-size:22.500px;letter-spacing:-.56px;color:#0f141a}
.ec2{display:flex;align-items:center;gap:6px;margin-top:26px;height:25px;letter-spacing:-.12px}
.filter{margin-top:10px;width:238px;height:40px;border:1px solid #8c8c94;border-radius:10px;display:flex;align-items:center;justify-content:space-between;padding:0 18px 0 15px;color:#656871;letter-spacing:.15px}
.grp{display:flex;align-items:center;height:25px;margin:19px 0 6px -23px;gap:10px;font-size:20px;letter-spacing:-.58px;color:#0f141a}
.g2{margin-top:15px;letter-spacing:-.72px}
.sidein ul{letter-spacing:-.34px}
.sidein li{padding:5px 0}
.sidein .on{color:#006ce0;font-weight:700;letter-spacing:-.42px}
.sb{width:19px;background:#fcfcfc;display:flex;flex-direction:column;align-items:center;padding-top:6px;flex:none}
.sb i{width:11px;border-radius:6px;background:#8b8b8b;margin-top:7px}
.sb .dn{margin:auto 0 5px}
.th1{height:207px}.th2{height:518px}.th3{height:822px}
main{flex:1;min-width:0;padding:5px 20px 0 70px;overflow:hidden;white-space:nowrap}
.flash{height:45px;border-radius:15px;background:#00802f;color:#fff;display:flex;align-items:center;padding:0 23px 0 20px;box-shadow:0 4px 12px rgba(0,7,22,.16)}
.flash span{margin:-2px 0 0 9px;flex:1;letter-spacing:-.12px}
.fx{margin-top:-1px}
.title{display:flex;justify-content:space-between;align-items:center;margin-top:10px;height:38px}
h1{font-size:30px;line-height:38px;letter-spacing:-.78px;margin-top:-1px}
.actions{width:131px;height:34px;border:2.500px solid #006ce0;border-radius:17px;background:#fff;color:#006ce0;font-weight:700;font-size:17.500px;letter-spacing:-.45px;display:flex;align-items:center;gap:13px;padding-left:20px}
.actions span{line-height:24px;margin-top:-2px}
.details{margin-top:15px;height:372px;border:1px solid #c6c6cd;border-radius:20px;padding:18px 25px 0}
h2{font-size:25px;line-height:31px;letter-spacing:-1.100px}
.details h2{height:31px}
h2 a,h3 a{font-size:15px;font-weight:600;color:#006ce0;letter-spacing:-.3px;margin-left:15px}
.cols{margin-top:15px;display:grid;grid-template-columns:350px 370px 369px 1fr;height:285px}
.cols dl{height:285px}
.cols dl+dl{border-left:1px solid #c6c6cd;padding-left:20px}
dt{font-weight:700;letter-spacing:-.47px}
.nau{letter-spacing:-.67px}.r53{letter-spacing:-.41px}
dd{margin-bottom:20px}
.cp,.ok,.off{display:flex;align-items:center}
.cp{letter-spacing:.05px}
.cp svg{margin:0 15px 0 5px}
.ok svg,.off svg{margin-right:5px}
.lk{color:#006ce0;letter-spacing:.12px}.ok{color:#00802f;letter-spacing:-.15px}.off{color:#656871}
.wide{letter-spacing:.2px}
.tabs{margin-top:14px;height:48px;border-bottom:1px solid #c6c6cd;display:flex;font-size:20px;font-weight:700;letter-spacing:-.86px;color:#424650;position:relative}
.tabs a{height:24px;margin-top:12px;line-height:22px;padding-left:26px;border-right:1px solid #c6c6cd}
.t1{width:183px;color:#006ce0}.t2{width:106px}.tabs .t3{width:140px;letter-spacing:-.46px}.t4{width:95px}.tabs .t5{border:0}
.t1::after{content:"";position:absolute;left:2px;bottom:0;width:180px;height:5px;border-radius:3px;background:#006ce0}
.rmap{margin-top:15px;height:400px;border:1px solid #c6c6cd;border-radius:20px;overflow:hidden}
.rmap h2{height:53px;padding:16px 25px 0;letter-spacing:-1.430px}
.rmap h2 a{margin-left:16px}
.cards{background:#f4f4f7;height:346px;padding:40px 50px;display:flex;gap:50px}
.card{width:400px;flex:none;background:#fff;border-radius:10px;padding:27px 36px}
.first{padding-left:25px}
h3{font-size:22.500px;line-height:28px;letter-spacing:-.68px}
h3 a{margin-left:11px;letter-spacing:0}
.card p{font-size:15px;line-height:20px;margin-top:9.500px;color:#424650;letter-spacing:-.2px}
.first p{padding-left:10px}

footer{height:38px;flex:none;position:relative;background:#161d26;border-top:1px solid #424650;display:flex;align-items:center;padding-left:20px;color:#f3f3f7;font-size:15px;font-weight:500;letter-spacing:-.38px;white-space:nowrap}
.f1{width:104px;margin-left:7px}.f2{flex:1;letter-spacing:-.45px}.f3{width:380px;color:#c6c6cd;letter-spacing:-.3px}.f4{width:80px}.f5{width:72px}.f6{width:150px;letter-spacing:-.5px}

.taskbar{height:60px;border-top:1px solid #b3b0ae;display:flex;align-items:center;position:relative;background:linear-gradient(90deg,#d8dce3 0,#d0dfe9 140px,#dadee2 240px,#ebe1d3 295px,#dde0e0 400px,#e4e4e0 570px,#f3e9c9 700px,#dddce4 840px,#d6dbe7 930px,#dadcdd 1080px,#dcdbd9 1210px,#efddcc 1290px,#f5e3cf 1480px,#ece5da 1610px,#efe4bb 1700px,#dfe6d0 1790px,#d6e5dc 1920px)}
.widget{width:245px;padding-left:26px;position:relative}
.badge{position:absolute;left:40px;top:-1px;width:20px;height:20px;border-radius:50%;background:#c42b1c;color:#fff;font-size:14px;line-height:19px;text-align:center;letter-spacing:-.5px}
.apps-row{display:grid;grid-template-columns:repeat(23,55.080px);padding-bottom:1px}
.apps-row i{height:48px;display:flex;align-items:center;justify-content:center;position:relative}
.apps-row svg{width:30px;height:30px;position:relative}
.act::before{content:"";position:absolute;left:4px;top:0;width:43px;height:48px;border-radius:6px;background:#eff1f5;box-shadow:5px 0 0 -1px #e4e7ed,0 0 0 1px #d3d6dc}
.act::after{content:"";position:absolute;left:18px;bottom:0;width:20px;height:4px;border-radius:2px;background:#0078d4}
.run::after{content:"";position:absolute;left:24px;bottom:0;width:8px;height:4px;border-radius:2px;background:#8a8580}
.stk{font:9.500px "Open Sans",sans-serif;fill:#fff}
.edg{font:13px "Open Sans",sans-serif;fill:#fff}
.tray{margin-left:auto;display:flex;align-items:center;font-size:15px;line-height:20px;color:#222;letter-spacing:-.4px;padding:0 25px 2px 0}
.up{margin-right:24px}.lang{width:33px;text-align:center;margin-right:21px}
.wifi{margin-right:10px}.vol{margin-right:10px}.bat{margin-right:9px}
.clock{width:89px;text-align:right;white-space:nowrap;letter-spacing:0}.bell{margin-left:11px}
```
